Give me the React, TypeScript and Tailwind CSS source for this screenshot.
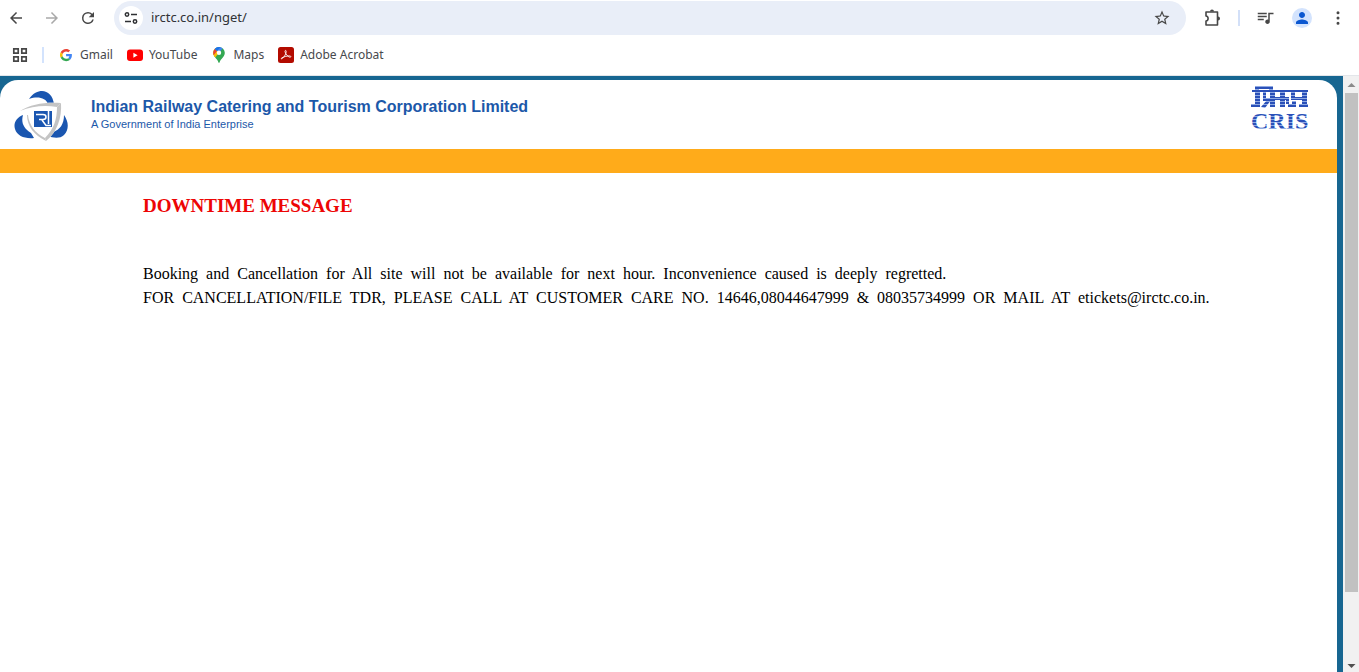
// src/App.tsx
import React, { useState } from "react";

interface Bookmark {
  name: string;
  href: string;
  icon: React.ReactNode;
}

const GoogleIcon = () => (
  <svg className="size-4" viewBox="0 0 48 48" aria-hidden="true">
    <g transform="translate(6 6) scale(0.76)">
      <path fill="#EA4335" d="M24 9.5c3.54 0 6.71 1.22 9.21 3.6l6.85-6.85C35.9 2.38 30.47 0 24 0 14.62 0 6.51 5.38 2.56 13.22l7.98 6.19C12.43 13.72 17.74 9.5 24 9.5z" />
      <path fill="#4285F4" d="M46.98 24.55c0-1.57-.15-3.09-.38-4.55H24v9.02h12.94c-.58 2.96-2.26 5.48-4.78 7.18l7.73 6c4.51-4.18 7.09-10.36 7.09-17.65z" />
      <path fill="#FBBC05" d="M10.53 28.59c-.48-1.45-.76-2.99-.76-4.59s.27-3.14.76-4.59l-7.98-6.19C.92 16.46 0 20.12 0 24c0 3.88.92 7.54 2.56 10.78l7.97-6.19z" />
      <path fill="#34A853" d="M24 48c6.48 0 11.93-2.13 15.89-5.81l-7.73-6c-2.15 1.45-4.92 2.3-8.16 2.3-6.26 0-11.57-4.22-13.47-9.91l-7.98 6.19C6.51 42.62 14.62 48 24 48z" />
    </g>
  </svg>
);

const YouTubeIcon = () => (
  <svg className="size-4" viewBox="0 0 16 16" aria-hidden="true">
    <rect y="2.5" width="16" height="11.5" rx="3" fill="#f00" />
    <path d="M6.4 5.8v4.9l4.2-2.45z" fill="#fff" />
  </svg>
);

const MapsIcon = () => (
  <svg className="size-4" viewBox="0 0 16 16" aria-hidden="true">
    <defs>
      <clipPath id="pin">
        <path d="M8 0a5.8 5.8 0 0 0-5.8 5.8c0 2 .9 3.3 2 4.7C5.6 12.3 6.9 13.4 7.4 15.3c.2.9 1 .9 1.2 0 .5-1.900 1.800-3 3.200-4.800 1.100-1.400 2-2.700 2-4.700A5.800 5.800 0 0 0 8 0z" />
      </clipPath>
    </defs>
    <g clipPath="url(#pin)">
      <rect width="16" height="16" fill="#34a853" />
      <path d="M3.5 2 8 5.8 12.800 0H5z" fill="#4285f4" />
      <path d="M3.5 1.800 8 5.800 3.800 11-1 8z" fill="#fbbc04" />
      <path d="M0 0h5.500L3.600 1.900 6 4 2.600 8.200 0 6z" fill="#ea4335" />
      <path d="M5 0 3.600 1.900 6 4 9.600 0z" fill="#1a73e8" />
    </g>
    <circle cx="8" cy="5.8" r="2.2" fill="#fff" />
  </svg>
);

const AcrobatIcon = () => (
  <svg className="size-4" viewBox="0 0 16 16" aria-hidden="true">
    <rect width="16" height="16" rx="2.5" fill="#b30b00" />
    <path
      d="M3.500 11.800c1.600-.4 4.600-4.200 4.700-7.300.1-1.500-1.400-1.400-1.200.1.300 2.400 2.900 5.200 4.900 5.600 1.300.2 1.300-1.300-.3-1.300-2.500 0-5.300.7-7.600 1.900-.9.500-1.100 1.100-.5 1z"
      fill="none"
      stroke="#fff"
      strokeWidth="0.9"
    />
  </svg>
);

const bookmarks: Bookmark[] = [
  { name: "Gmail", href: "#gmail", icon: <GoogleIcon /> },
  { name: "YouTube", href: "#youtube", icon: <YouTubeIcon /> },
  { name: "Maps", href: "#maps", icon: <MapsIcon /> },
  { name: "Adobe Acrobat", href: "#acrobat", icon: <AcrobatIcon /> },
];

// The notice is spaced out with two blanks between words
const noticeLines = [
  "Booking  and  Cancellation  for  All  site  will  not  be  available  for  next  hour.  Inconvenience  caused  is  deeply  regretted.",
  "FOR  CANCELLATION/FILE  TDR,  PLEASE  CALL  AT  CUSTOMER  CARE  NO.  14646,08044647999  &  08035734999  OR  MAIL  AT  etickets@irctc.co.in.",
];

const IconButton: React.FC<{
  label: string;
  path: string;
  className?: string;
}> = ({ label, path, className = "text-[#474747]" }) => (
  <button
    type="button"
    aria-label={label}
    className={`flex size-5 shrink-0 items-center justify-center ${className}`}
  >
    <svg className="size-[18px]" viewBox="0 0 24 24" fill="currentColor">
      <path d={path} />
    </svg>
  </button>
);

const BrowserBar: React.FC = () => {
  const [url, setUrl] = useState<string>("irctc.co.in/nget/");

  return (
    <header className="shrink-0 border-b border-[#e3e6ea] font-['Noto_Sans',sans-serif]">
      <div className="flex h-9 items-center pr-[11px] pl-1.5">
        <div className="flex gap-4">
          <IconButton label="Back" path="M20 11H7.830l5.590-5.590L12 4l-8 8 8 8 1.410-1.410L7.830 13H20z" />
          <IconButton
            label="Forward"
            className="text-[#a9a9a9]"
            path="M12 4l-1.410 1.410L16.170 11H4v2h12.170l-5.580 5.590L12 20l8-8z"
          />
          <IconButton
            label="Reload"
            path="M17.650 6.350A7.960 7.960 0 0 0 12 4a8 8 0 1 0 7.730 10h-2.080A6 6 0 1 1 12 6c1.660 0 3.140.69 4.220 1.780L13 11h7V4z"
          />
        </div>

        <div className="ml-4 flex h-[34px] flex-1 items-center rounded-full bg-[#e9eef8] pr-3.5 pl-[5px]">
          <button
            type="button"
            aria-label="Site information"
            className="flex size-6 items-center justify-center rounded-full bg-white text-[#2f3033]"
          >
            <svg className="size-4" viewBox="0 0 16 16" fill="none" stroke="currentColor" strokeWidth="1.5">
              <circle cx="4" cy="4.5" r="1.7" />
              <path d="M8 4.5h6M2 11.5h6" />
              <circle cx="12" cy="11.5" r="1.7" />
            </svg>
          </button>
          <input
            type="text"
            aria-label="Address"
            value={url}
            onChange={(e) => setUrl(e.target.value)}
            className="ml-2 min-w-0 flex-1 bg-transparent text-[13px] text-[#303236] focus:outline-none"
          />
          <IconButton
            label="Bookmark this page"
            path="M22 9.240l-7.190-.62L12 2 9.190 8.630 2 9.240l5.460 4.730L5.820 21 12 17.270 18.180 21l-1.630-7.030L22 9.240zM12 15.400l-3.760 2.270 1-4.280-3.320-2.880 4.380-.38L12 6.100l1.710 4.040 4.380.38-3.320 2.880 1 4.280L12 15.400z"
          />
        </div>

        <div className="ml-4 flex items-center gap-4">
          <button type="button" aria-label="Extensions" className="text-[#474747]">
            <svg className="size-5" viewBox="0 0 20 20">
              <path
                d="M4 4h11.500v13H4v-4c2.800-.3 2.800-4.700 0-5z"
                fill="none"
                stroke="currentColor"
                strokeWidth="1.6"
                strokeLinejoin="round"
              />
              <path d="M8 3.500a2 2 0 0 1 4 0zM16 8.500a2 2 0 0 1 0 4z" fill="currentColor" />
            </svg>
          </button>
          <span className="h-4 w-0.5 bg-[#d3e0f8]" />
          <IconButton
            label="Media controls"
            path="M15 5v9.180c-.31-.11-.65-.18-1-.18-1.660 0-3 1.340-3 3s1.340 3 3 3 3-1.340 3-3V7h5V5zM1 5h12v2H1zM1 9h12v2H1zM1 13h8v2H1z"
          />
          <IconButton
            label="Profile"
            className="rounded-full bg-[#d3e3fd] text-[#0b57d0]"
            path="M12 12c2.210 0 4-1.790 4-4s-1.790-4-4-4-4 1.790-4 4 1.790 4 4 4zm0 2c-2.670 0-8 1.340-8 4v2h16v-2c0-2.660-5.330-4-8-4z"
          />
          <IconButton
            label="Menu"
            path="M12 7a2 2 0 1 0 0-4 2 2 0 0 0 0 4zm0 3a2 2 0 1 0 0 4 2 2 0 0 0 0-4zm0 7a2 2 0 1 0 0 4 2 2 0 0 0 0-4z"
          />
        </div>
      </div>

      <nav className="flex h-[39px] items-center gap-3.5 pb-0.5 pl-3 text-xs text-[#47494d]">
        <button type="button" aria-label="Apps" className="text-[#474747]">
          <svg className="size-4" viewBox="0 0 16 16" fill="none" stroke="currentColor" strokeWidth="1.7">
            <path d="M1.800 1.800h4.400v4.400H1.800zM9.800 1.800h4.400v4.400H9.800zM1.800 9.800h4.400v4.400H1.800zM9.800 9.800h4.400v4.400H9.800z" />
          </svg>
        </button>
        <span className="h-4 w-0.5 bg-[#d3e3fd]" />
        {bookmarks.map((item) => (
          <a key={item.name} href={item.href} className="flex items-center gap-1.5">
            {item.icon}
            {item.name}
          </a>
        ))}
      </nav>
    </header>
  );
};

const IrctcLogo = () => (
  <svg className="h-[52px] w-14 shrink-0" viewBox="0 0 56 52" role="img" aria-label="IRCTC">
    <g fill="#1a56b0">
      <path d="M15 9C19 3 24 1 28 1 34 1 39 6 40 14H34C32 8 24 6 15 9z" />
      <path d="M9 25C7 32 9 38 17 43L20 48C11 49 3 46 1 39-1 33 3 27 9 25z" />
      <path d="M50 25C55 32 55 40 50 45 46 49 39 48 34 46L39 42C46 40 50 34 50 25z" />
    </g>
    <path d="M6 21C17 14 31 12 47 13 48 28 43 42 32 51 20 45 13 36 12 24z" fill="#fff" />
    <g fill="#c4c4c4">
      <path d="M6 21C17 14 31 12 47 13L43 17C31 15 18 16 6 21z" />
      <path d="M47 13C48 28 43 42 32 51L31 48C40 39 43 29 43 17z" />
      <path d="M14 25C15 35 21 43 31 48L32 51C20 45 13 36 13 25z" />
    </g>
    <path d="M20 21h18v16H20z" fill="#1a56b0" />
    <path
      d="M22 24.500h7c4 0 4 5 0 5h-4M28 30l4 5.500h5M34.500 21v13"
      fill="none"
      stroke="#fff"
      strokeWidth="1.5"
    />
  </svg>
);

const CrisLogo = () => (
  <svg className="h-14 w-16 shrink-0" viewBox="0 0 64 56" role="img" aria-label="CRIS">
    <defs>
      <pattern id="stripes" width="64" height="3" patternUnits="userSpaceOnUse">
        <rect width="64" height="3" fill="#8fa9e2" />
        <rect width="64" height="2" fill="#2a50b8" />
      </pattern>
    </defs>
    <path
      d="M6 2h18v5h-4v-2H10v2H6zM6 8h5v15H6zM14 8h3v7h-3zM21 8h5v15h-5zM14 14h8v3h-8zM12 23l6-7h4l-6 8zM26 13h14v3H26zM31 8h5v15h-5zM37 16h3v4h-3zM43 13h12v3H43zM42 8h4v8h-4zM43 17h4v6h-4zM53 8h5v15h-5zM39 20h8v3h-8zM50 20h9v3h-9zM2 20h9v3H2z"
      fill="url(#stripes)"
    />
    <path d="M3 7h56" stroke="#2a50b8" strokeWidth="2" />
    <text
      x="2"
      y="45"
      fontFamily="Liberation Serif, serif"
      fontSize="24"
      fontWeight="700"
      fill="url(#stripes)"
    >
      CRIS
    </text>
  </svg>
);

const SiteHeader: React.FC = () => (
  <header>
    <div className="flex h-[69px] items-start justify-between pt-1 pr-6 pl-3.5">
      <div className="flex gap-[21px] pt-1.5">
        <IrctcLogo />
        <div className="pt-2 font-['Liberation_Sans',sans-serif] text-[#1c58a9]">
          <p className="text-base leading-[18px] font-bold">
            Indian Railway Catering and Tourism Corporation Limited
          </p>
          <p className="text-[11px] leading-4">A Government of India Enterprise</p>
        </div>
      </div>
      <CrisLogo />
    </div>
    <div className="h-6 bg-[#ffab1a]" />
  </header>
);

const ScrollBar: React.FC = () => (
  <div className="flex w-4 shrink-0 flex-col items-center bg-[#f1f1f1]" aria-hidden="true">
    <svg className="h-[17px] w-4" viewBox="0 0 16 17">
      <path d="M4.500 11h8l-4-4z" fill="#8b8b8b" />
    </svg>
    <div className="flex w-full flex-1 flex-col pr-px pl-0.5">
      <div className="h-[88%] bg-[#c1c1c1]" />
    </div>
    <svg className="h-3 w-4" viewBox="0 0 16 12">
      <path d="M4.500 4h8l-4 4z" fill="#505050" />
    </svg>
  </div>
);

const App: React.FC = () => {
  return (
    <div className="flex h-screen flex-col overflow-hidden bg-white">
      <BrowserBar />
      <div className="flex min-h-0 flex-1">
        <div className="flex min-w-0 flex-1 bg-[#176691] pt-1 pr-1.5">
          <div className="min-w-0 flex-1 rounded-t-[18px] bg-white">
            <SiteHeader />
            {/* Downtime notice */}
            <main className="pt-5 pr-16 pl-[143px] font-['Liberation_Serif',serif] text-black">
              <h1 className="text-[19px] leading-[26px] font-bold text-[#ed0505]">
                DOWNTIME MESSAGE
              </h1>
              <div className="mt-[43px] text-base leading-6 whitespace-pre-wrap">
                {noticeLines.map((line) => (
                  <p key={line}>{line}</p>
                ))}
              </div>
            </main>
          </div>
        </div>
        <ScrollBar />
      </div>
    </div>
  );
};

export default App;
